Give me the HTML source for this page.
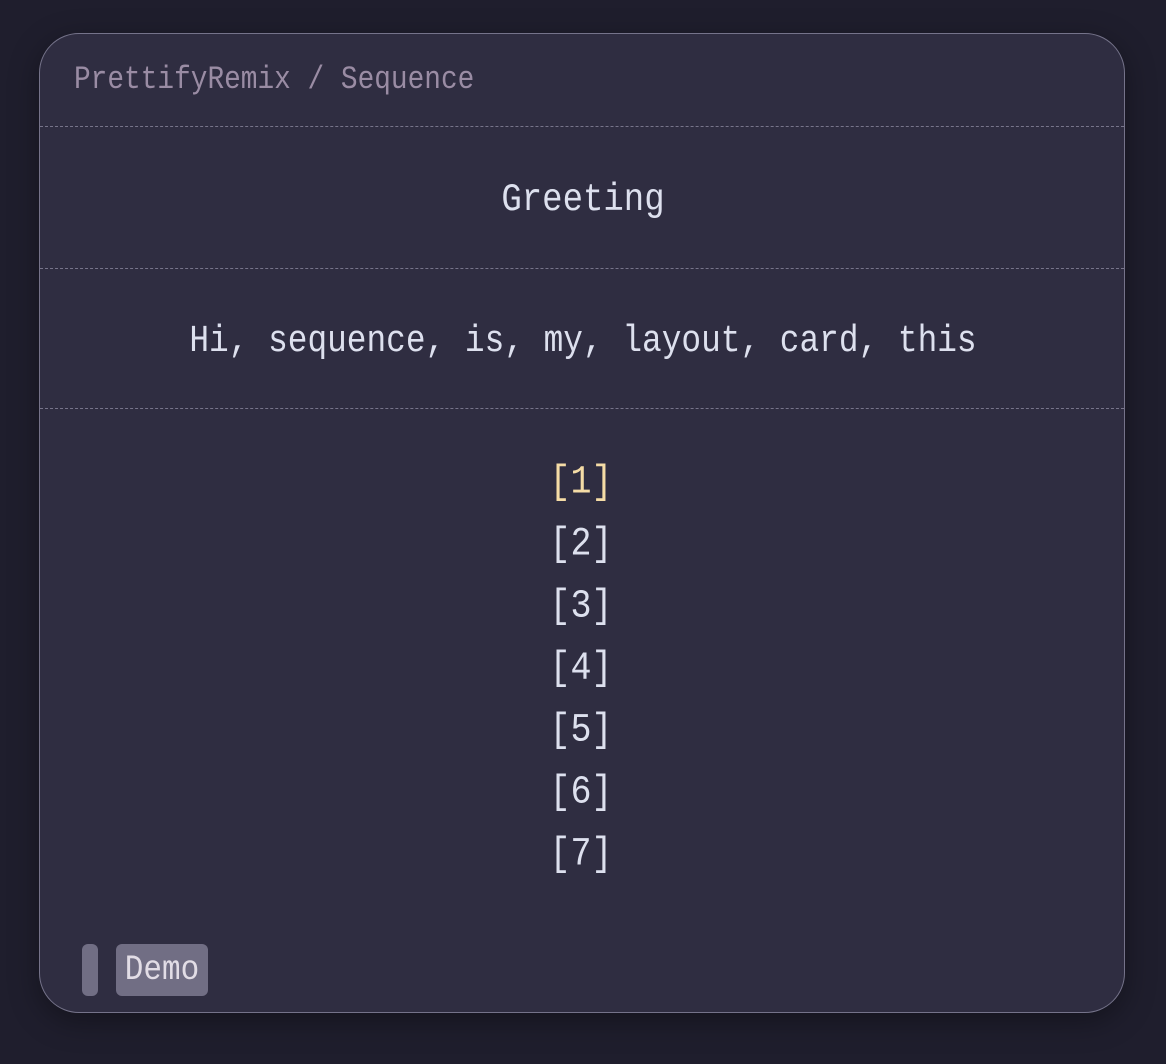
<!DOCTYPE html>
<html><head><meta charset="utf-8"><style>
html,body{margin:0;padding:0;width:1166px;height:1064px;background:#1f1e2d;overflow:hidden}
.card{position:absolute;left:39px;top:33px;width:1084px;height:978px;border:1px solid #75738a;border-radius:40px;background:#2f2d41;box-shadow:0 8px 30px rgba(0,0,0,.35)}
.t{position:absolute;left:0;width:1166px;text-align:center;font-family:"Liberation Mono",monospace;color:#dde0ee;white-space:pre;line-height:1;transform:scaleY(1.15)}
.hr{position:absolute;left:40px;width:1084px;height:0;border-top:1px dashed #77748a}
</style></head><body>
<div class="card"></div>
<div class="t" style="left:74px;width:auto;text-align:left;top:67px;font-size:27.8px;color:#9a8ca4">PrettifyRemix / Sequence</div>
<div class="hr" style="top:126px"></div>
<div class="t" style="top:184px;font-size:34px">Greeting</div>
<div class="hr" style="top:268px"></div>
<div class="t" style="top:326px;font-size:32.8px">Hi, sequence, is, my, layout, card, this</div>
<div class="hr" style="top:408px"></div>
<div class="t" style="left:-2px;top:465px;font-size:35px;color:#f5dca6">[1]</div>
<div class="t" style="left:-2px;top:527px;font-size:35px">[2]</div>
<div class="t" style="left:-2px;top:589px;font-size:35px">[3]</div>
<div class="t" style="left:-2px;top:651px;font-size:35px">[4]</div>
<div class="t" style="left:-2px;top:713px;font-size:35px">[5]</div>
<div class="t" style="left:-2px;top:775px;font-size:35px">[6]</div>
<div class="t" style="left:-2px;top:837px;font-size:35px">[7]</div>
<div style="position:absolute;left:82px;top:944px;width:16px;height:52px;border-radius:6px;background:#716e84"></div>
<div style="position:absolute;left:116px;top:944px;width:92px;height:52px;border-radius:6px;background:#716e84"></div>
<div class="t" style="left:116px;width:92px;top:955px;font-size:31px;color:#e2dde6">Demo</div>
</body></html>
